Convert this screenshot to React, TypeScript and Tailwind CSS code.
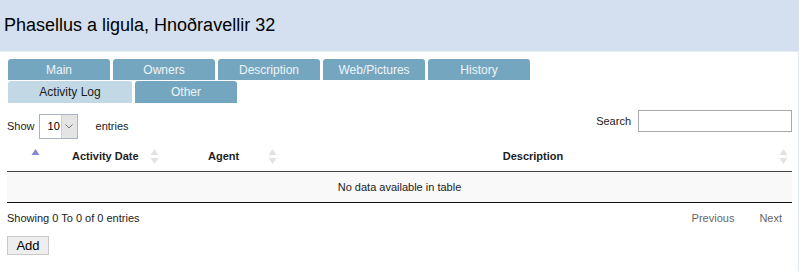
import React from "react";

const SortBoth = () => (
  <svg width="9" height="17" viewBox="0 0 9 17" className="shrink-0">
    <polygon points="4.5,1 8.5,7 0.5,7" fill="#e2e2e2" />
    <polygon points="0.5,10 8.5,10 4.5,16" fill="#e2e2e2" />
  </svg>
);

const SortAsc = () => (
  <svg width="9" height="17" viewBox="0 0 9 17" className="shrink-0">
    <polygon points="4.5,3 8.5,9 0.5,9" fill="#8787da" />
  </svg>
);

const tabs1 = ["Main", "Owners", "Description", "Web/Pictures", "History"];

export default function App() {
  return (
    <div
      className="w-[799px] h-[272px] bg-white overflow-hidden text-[#222]"
      style={{ fontFamily: '"Liberation Sans", Arial, sans-serif' }}
    >
      <div className="h-[52px] bg-[#d4e0ef] flex items-center pl-[4px] border-b border-[#e4ebf5]">
        <h1 className="text-[18px] leading-none text-black mt-[-2px]">
          Phasellus a ligula, Hnoðravellir 32
        </h1>
      </div>
      <div className="border-r border-[#dfe6ee] h-[219px]">
        <div className="pl-[8px] pt-[7px] flex flex-col gap-[1px]">
          <div className="flex gap-[3px]">
            {tabs1.map((t) => (
              <div
                key={t}
                className="w-[102px] h-[21px] bg-[#74a7bf] rounded-t-[3px] flex items-center justify-center text-[12px] text-[#eef4f8]"
              >
                {t}
              </div>
            ))}
          </div>
          <div className="flex gap-[3px]">
            <div className="w-[124px] h-[22px] bg-[#c3d8e5] rounded-t-[3px] flex items-center justify-center text-[12px] text-[#1a1a1a]">
              Activity Log
            </div>
            <div className="w-[102px] h-[22px] bg-[#74a7bf] rounded-t-[3px] flex items-center justify-center text-[12px] text-[#eef4f8]">
              Other
            </div>
          </div>
        </div>

        <div className="pl-[7px] pr-[6px]">
          <div className="flex items-start justify-between mt-[7px] text-[11px]">
            <div className="flex items-center mt-[4px]">
              <span>Show</span>
              <div className="ml-[4px] w-[39px] h-[25px] border border-[#a9b5c4] flex items-stretch bg-white">
                <span className="flex-1 pl-[8px] flex items-center text-[11px] text-black">10</span>
                <span className="w-[16px] bg-[#e4e4e4] border-l border-[#cfcfcf] flex items-center justify-center">
                  <svg width="8" height="5" viewBox="0 0 8 5">
                    <polyline points="0.5,0.5 4,4 7.5,0.5" fill="none" stroke="#777" strokeWidth="1" />
                  </svg>
                </span>
              </div>
              <span className="ml-[18px]">entries</span>
            </div>
            <div className="flex items-center">
              <span className="mr-[7px]">Search</span>
              <div className="w-[154px] h-[22px] border border-[#a8a8a8] bg-white" />
            </div>
          </div>

          <div className="mt-[2px] text-[11px]">
            <div className="flex items-center h-[31px] border-b border-[#444] font-bold">
              <div className="w-[57px] flex justify-center pb-[4px]">
                <SortAsc />
              </div>
              <div className="w-[143px] flex items-center">
                <span className="ml-[8px]">Activity Date</span>
                <span className="ml-[11px]"><SortBoth /></span>
              </div>
              <div className="w-[80px] flex items-center">
                <span className="ml-[1px]">Agent</span>
                <span className="ml-[29px]"><SortBoth /></span>
              </div>
              <div className="flex-1 flex items-center">
                <span className="flex-1 text-center">Description</span>
                <span className="mr-[4px]"><SortBoth /></span>
              </div>
            </div>
            <div className="h-[31px] bg-[#f9f9f9] border-b border-[#111] flex items-center justify-center">
              No data available in table
            </div>
          </div>

          <div className="flex items-center justify-between mt-[7px] text-[11px]">
            <span>Showing 0 To 0 of 0 entries</span>
            <div className="flex text-[#666] mr-[10px]">
              <span>Previous</span>
              <span className="ml-[25px]">Next</span>
            </div>
          </div>

          <button className="mt-[9px] w-[42px] h-[19px] border border-[#c9c9c9] bg-[#eeeeee] text-[13px] text-black flex items-center justify-center leading-none">
            Add
          </button>
        </div>
      </div>
    </div>
  );
}
